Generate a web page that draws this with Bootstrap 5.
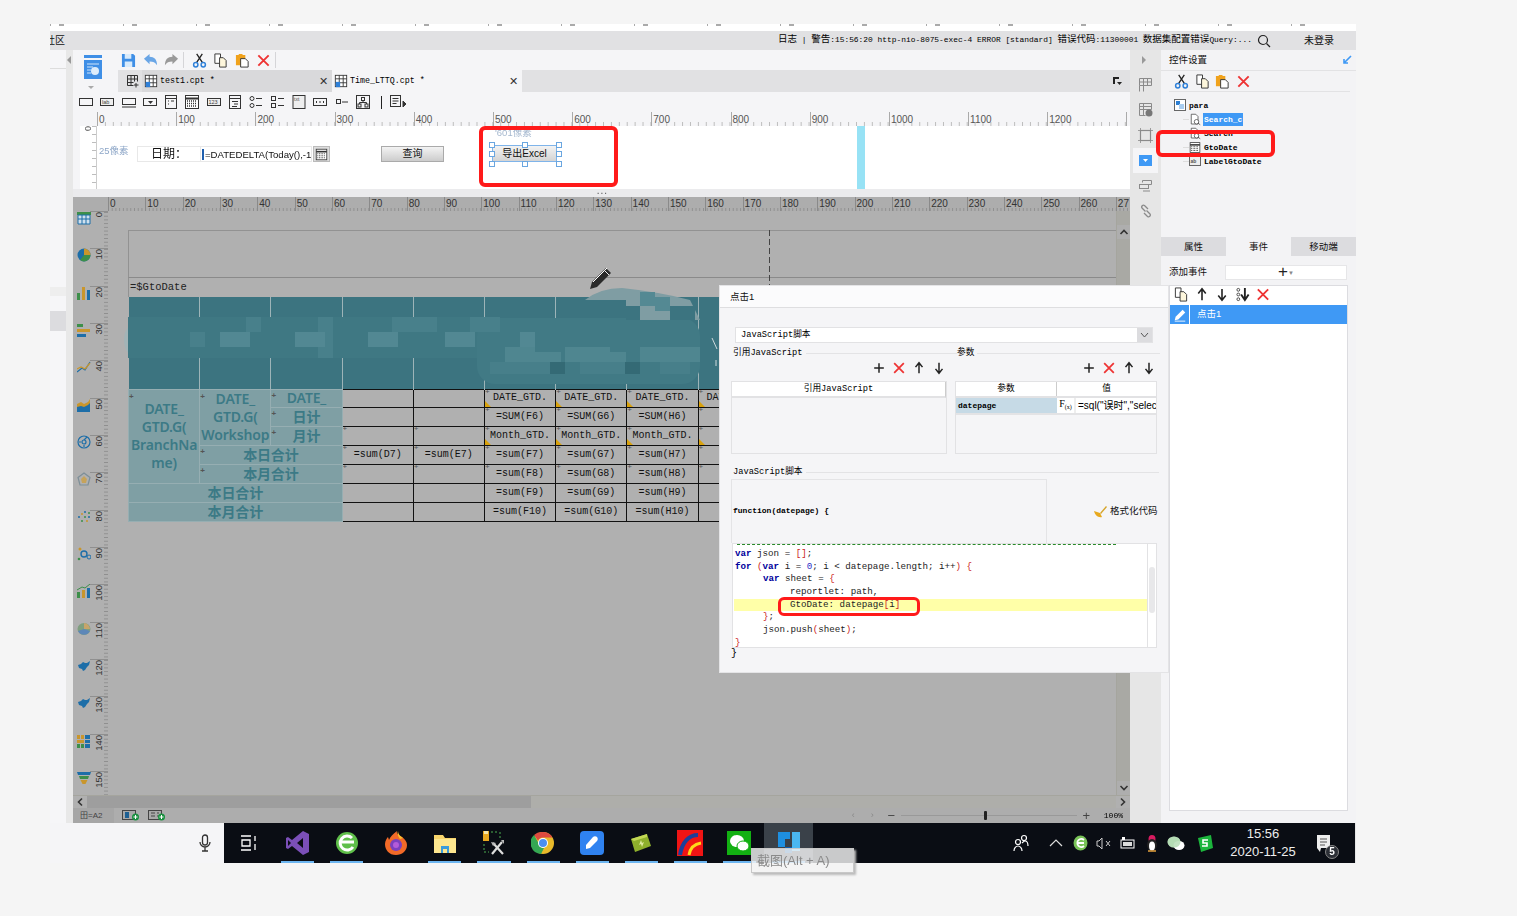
<!doctype html>
<html lang="zh">
<head>
<meta charset="utf-8">
<title>FineReport</title>
<link href="https://cdn.jsdelivr.net/npm/bootstrap@5.3.0/dist/css/bootstrap.min.css" rel="stylesheet">
<style>
html,body{background:#f5f5f5;margin:0;height:916px;overflow:hidden}
body{font-family:"Liberation Sans","Noto Sans CJK SC",sans-serif;font-size:10px;color:#111}
.mono{font-family:"Liberation Mono","Noto Sans CJK SC",monospace;color:#000}
.shot{position:relative;width:1306px;height:839px;margin:24px 0 0 50px;filter:blur(.3px)}
.scrap{height:7px;background:#fff linear-gradient(90deg,#aaa 1px,transparent 1px,transparent 9px,#aaa 9px,#aaa 14px,transparent 14px) 0 0/73px 2px repeat-x}
.headbar{height:19px;background:#e1e1e3;font-size:9.5px;white-space:nowrap;overflow:hidden}
.headbar .cut{margin-left:-5px;font-size:10px}
.logtxt{font-size:7.9px;margin-right:5px}
.logtxt b{font-weight:400;font-size:9.5px}
.userlink{width:85px;padding-left:33px;font-size:10px}
.mainrow{height:773px}
.lstrip{width:16px;background:#f6f6f8;position:relative}
.lstrip i{display:block}
.lline{height:1px;background:#ddd;margin-top:18px}
.lgap{height:218px}
.ltab{height:9px;background:#eee}
.lgap2{height:15px}
.lblock{height:20px;background:#dcdcdf}
.rail{width:7px;background:#e8e8e8;padding-top:6px}
.tri-l{width:0;height:0;border:4px solid transparent;border-right-color:#999;border-left:0;margin-left:1px}
.designer{width:1057px}
.dtop{background:#f5f5f7}
.bigcol{width:45px;height:42px}
.bigcol svg{margin:5px 0 0 10px;display:block}
.tbar{height:20px;background:#f5f5f7}
.tcell{width:21.5px;height:20px}
.vsep{width:1px;height:16px;background:#d5d5d8}
.vsep-m{margin-right:5px}
.tabs{height:22px;background:#e1e1e3}
.tadd{width:24px;padding-left:8px;background:#e1e1e3}
.tab1,.tab2{width:190px;font-size:8.3px;padding:0 3px 0 2px}
.tab1{background:#d9d9db}
.tab2{background:#f5f5f7}
.tab-x{margin-left:auto;font-size:11px;color:#333;margin-right:1px;font-family:"Liberation Sans",sans-serif}
.tab-lbl{margin-left:2px;white-space:pre}
.tabflag{margin:0 8px 0 auto}
.wrow{height:20px;padding-left:5px;background:#f5f5f7}
.wcell{width:21.3px}
.wbar{width:1px;height:13px;background:#222;margin:0 7px 0 5px}
.htop{height:14px;background:#f5f5f7;padding-left:24px}
.hr-top{display:flex;flex:1;height:14px;overflow:hidden;background:linear-gradient(90deg,#bdbdbd 1px,transparent 1px) 0 100%/7.92px 4px repeat-x}
.hr-top span{flex:0 0 79.2px;border-left:1px solid #aaa;padding-left:1px;line-height:15px;font-size:10px;color:#555}
.pcol{width:24px;height:63px;background:#f5f5f7;padding-left:7px}
.pruler{width:17px;height:63px;background:#fff linear-gradient(#bdbdbd 1px,transparent 1px) 100% 0/4px 8px repeat-y;color:#555;font-size:9px;border-right:1px solid #ccc;padding-left:3px}
.vlab{writing-mode:vertical-rl;transform:rotate(180deg);display:block;line-height:10px}
.pcanvas{position:relative;height:63px;background:#fff;flex:1;overflow:visible}
.pc{position:absolute}
.px25{left:2px;top:18px;color:#8ea7c8;font-size:9.5px}
.px601{left:398px;top:0;color:#a5b8cf;font-size:9.5px}
.datebox{left:40px;top:20px;width:64px;height:16px;border:1px solid #e8e8e8;font-size:12px;text-align:center;line-height:14px}
.datein{left:103px;top:20px;width:112px;height:16px;border:1px solid #e8e8e8;font-size:9.6px;line-height:15px;white-space:nowrap;overflow:hidden;padding-left:1px}
.datein::before{content:"";border-left:2px solid #1f5fae;margin-right:1px}
.calbtn{left:216px;top:20px;width:17px;height:16px;background:#ddd;border:1px solid #bbb}
.qbtn{left:284px;top:20px;width:63px;height:16px;background:linear-gradient(#f3f3f3,#ccc);border:1px solid #aaa;font-size:10px;line-height:14px;text-align:center}
.xbtn{left:395px;top:19px;width:65px;height:17px;background:linear-gradient(#f3f3f3,#d4d4d4);border:1px solid #7fb4ea;font-size:10px;line-height:15px;text-align:center;white-space:nowrap}
.hd{width:6px;height:6px;background:#fff;border:1px solid #6aa6e0}
.h1{left:392px;top:16px}.h2{left:425px;top:16px}.h3{left:459px;top:16px}
.h4{left:392px;top:25px}.h5{left:459px;top:25px}
.h6{left:392px;top:35px}.h7{left:425px;top:35px}.h8{left:459px;top:35px}
.guide{left:760px;top:0;width:8px;height:63px;background:#97e2f5}
.redbox{position:absolute;border:4px solid #ff1a1a;border-radius:6px}
.rb1{left:429px;top:102px;width:139px;height:61px}
.rb2{left:1106px;top:106px;width:119px;height:27px}
.rb3{left:728px;top:573px;width:142px;height:19px;border-width:3px}
.splitbar{height:8px;background:#ebebed;position:relative;color:#555;line-height:4px;text-align:right;padding-right:522px;letter-spacing:1px}
.dim{height:626px;background:#b0b0b0}
.dr{height:14px;padding-left:35px;background:#adadad}
.hr-dim{display:flex;flex:1;height:14px;overflow:hidden;background:linear-gradient(90deg,#8f8f8f 1px,transparent 1px) 0 100%/3.73px 3px repeat-x}
.hr-dim span{flex:0 0 37.33px;border-left:1px solid #8a8a8a;padding-left:1px;line-height:14px;font-size:10px;color:#333}
.dbody{height:584px}
.vcol{width:35px;overflow:hidden}
.vcell{height:37.33px;flex:none}
.vic{width:17px;padding-left:4px}
.vrl{width:18px;height:37.33px;color:#333;font-size:9.5px;border-top:1px solid #8f8f8f;background:linear-gradient(#8f8f8f 1px,transparent 1px) 100% 0/4px 3.73px repeat-y;padding-left:4px}
.vic svg{display:block}
.sheet{width:1008px;padding:19px 0 0 20px;overflow:hidden;background:#b0b0b0}
.frame1{height:47px;border-top:1px solid #929292;border-left:1px solid #929292}
.frame2{height:20px;border-top:1px solid #8a8a8a;border-left:1px solid #929292;font-size:10.5px;line-height:18px;padding-left:1px;color:#222}
.grid{table-layout:fixed;width:712px;border-collapse:collapse}
.grid col{width:71.2px}
.grid td{height:18.86px;padding:0;text-align:center;line-height:1;overflow:hidden;position:relative;white-space:nowrap}
.hdr td{height:92px;background:#3c7480;border-right:1px solid #9db4b8}
.tl{background:#7f9fa4;border:1px solid #96aeb2;color:#3c7a86;font-family:"Noto Sans","Noto Sans CJK SC",sans-serif;font-weight:600;font-size:14px;letter-spacing:-.15px}
.grid td.tl{line-height:16px}
.grid td.stack{line-height:18px}
.dk{border:1px solid #111;font-size:10px;color:#111}
.ck::before{content:"";position:absolute;left:0;bottom:0;border:3px solid transparent;border-left-color:#d9a20c;border-bottom-color:#d9a20c}
.pl::after{content:"+";position:absolute;left:0;top:-2px;font-size:8px;color:#555;font-family:"Liberation Sans",sans-serif}
.vscr{width:14px;background:#a9a9a4;border-left:1px solid #a5a59e}
.vscr-a{height:14px;background:#aeaeae;display:flex;align-items:center;justify-content:center}
.vscr-a:first-child{margin-top:14px}
.vscr-m{flex:1}
.hscr{height:13px;background:#aeaeaa;margin-left:0;border-top:1px solid #a5a59e}
.hscr-a{width:14px;background:#b0b0b0;flex:none;display:flex;align-items:center;justify-content:center}
.hscr-t{width:444px;background:#9e9e9e}
.hscr-r{flex:1}
.rot180{transform:rotate(180deg)}
.rot90{transform:rotate(90deg)}
.rot270{transform:rotate(-90deg)}
.stat{height:15px;background:#adadad;font-size:8px;color:#444}
.stat-a{width:41px;padding-left:7px;background:#a6a6a6}
.stat-i{margin-left:8px}
.stat-end{margin-left:auto;padding-right:7px}
.zm{color:#888;font-size:9px;width:19px;text-align:center}
.zdark{color:#444;font-size:13px}
.zline{width:176px;height:1px;background:#999;position:relative}
.zline::after{content:"";position:absolute;left:83px;top:-4px;width:3px;height:9px;background:#222;border-radius:1px}
.zpct{margin-left:8px;font-size:8px}
.rrail{width:31px;background:#e6e6e6;padding-top:2px}
.rr-a{height:16px;padding-left:12px}
.tri-r{width:0;height:0;border:4px solid transparent;border-left-color:#999;border-right:0}
.rr{height:25.3px}
.rr.on{background:#f5f5f7;margin:0 3px}
.panel{width:195px;background:#f3f3f5;position:relative}
.ptitle{height:21px;padding:0 4px 0 8px;border-bottom:1px solid #e2e2e4;font-size:9.5px}
.ptool{height:21px;margin:0 6px 0 8px;border-bottom:1px solid #e2e2e4;padding-left:5px;gap:5.500px}
.tree{height:145px;padding-top:6px;font-weight:700}
.tnode{height:14px;padding-left:28px;font-size:8px;white-space:nowrap;position:relative}
.tnode.root{padding-left:13px}
.tnode::before{content:"";position:absolute;left:22px;top:7px;width:6px;border-top:1px solid #ddd}
.tnode.root::before{display:none}
.tnode span{margin-left:2px;padding:0 1px;line-height:13px}
.tnode .sel{background:#3f99f5;color:#fff}
.ptabs{height:19px;font-size:9.5px}
.ptab{width:65px;text-align:center;line-height:19px;background:#dcdcdf}
.ptab.act{background:#f3f3f5}
.addrow{height:29px;padding:4px 8px 0;font-size:9.5px}
.addbox{margin-left:18px;width:122px;height:15px;background:#fff;border:1px solid #e6e6e8;text-align:center;font-size:17px;line-height:12px;color:#222}
.addbox small{font-size:6px;color:#888;vertical-align:2px}
.evlist{margin-left:8px;width:179px;height:526px;background:#fff;border:1px solid #dcdce0}
.evtool{height:19px;padding:0 0 2px 3px;gap:4.600px}
.evtool svg{flex:none}
.evsel{height:19px;background:#3f99f5;color:#fff;font-size:9.5px}
.evpen{width:20px;border-right:1px solid #fff;height:19px}
.evsel span{margin-left:7px}
.taskbar{height:40px}
.tleft{width:174px;background:#f5f5f7;padding-right:12px}
.tdark{flex:1;background:#0a0d14;color:#eee;border-right:1px solid #e6e6e6}
.titem{width:49.1px;height:40px;position:relative}
.titem.ul::after{content:"";position:absolute;left:8px;right:8px;bottom:0;height:2px;background:#6cb5f0}
.titem.hover{background:#3a4149}
.tray{margin-left:auto}
.w34{width:34px}.w24{width:24px}.w23{width:23px}.w25{width:25px}.w42{width:42px;margin-right:9px}
.sp6{width:6px}
.clock{width:82px;text-align:center;font-size:13px;line-height:18px}
.notif{position:relative}
.nbadge{position:absolute;left:21px;top:11px;width:14px;height:14px;border-radius:50%;background:#2c2f36;border:1px solid #888;color:#fff;font-size:10px;line-height:12px;text-align:center;font-weight:700}
.tip{position:absolute;left:701px;top:824px;width:103px;height:25px;background:rgba(244,244,244,.82);border:1px solid #c8c8c8;box-shadow:2px 2px 2px #bbb;color:#8a8a8a;font-size:13px;line-height:23px;padding-left:5px;white-space:nowrap}
.dialog{position:absolute;left:669px;top:261px;width:450px;height:388px;background:#f5f5f7;border:1px solid #e4e4e6}
.dhead{height:22px;background:#fbfbfc;border-bottom:1px solid #dedee0;padding-left:10px;font-size:9.5px;line-height:21px}
.dsel{margin:19px 15px 0 15px;height:16px;background:#fff;border:1px solid #e2e2e4;font-size:8.7px;line-height:14px;padding-left:5px}
.dsel i{float:right;width:15px;height:14px;background:#dcdcdf;margin-right:0}
.legends{height:21px;padding-left:13px;font-size:8.7px}
.leg1{width:224px}.leg1 span,.leg2 span,.leg3 span{background:#f5f5f7;padding-right:3px;position:relative}
.leg1,.leg2,.leg3{background:linear-gradient(#e3e3e5,#e3e3e5) 0 50%/100% 1px no-repeat}
.leg2{width:203px}
.dtools{height:16px;padding-right:9px;margin-top:-3px}
.dt{width:20px;height:16px}
.dtgap{width:130px}
.dtables{gap:8px;padding-left:11px;height:73px;margin-top:4px}
.tbl{border:1px solid #e2e2e4;height:73px;font-size:8.7px}
.tblL{width:216px}.tblR{width:202px}
.thd{height:16px;background:#fff;border-bottom:2px solid #e2e2e4;text-align:center;line-height:14px;flex:none}
.thA{flex:1;border-right:1px solid #ccc}
.thB{width:101px;border-right:1px solid #ccc}
.trow{height:17px;border-bottom:2px solid #e3e3e5}
.tk{width:101px;background:#c6dae6;line-height:15px;padding-left:2px;font-size:8px;font-weight:700}
.tfx{width:17px;font-family:"Liberation Serif",serif;font-size:10px;line-height:12px;text-align:center;background:#fff}
.tfx sub{font-size:6px}
.tval{flex:1;background:#fff;border-left:2px solid #eee;font-family:"Liberation Sans","Noto Sans CJK SC",sans-serif;font-size:10px;line-height:15px;padding-left:2px;white-space:nowrap;overflow:hidden}
.leg3{margin:12px 9px 0 13px;height:12px;font-size:8.7px;line-height:12px}
.fnrow{height:64px;padding-left:11px;margin-top:1px}
.fnbox{width:316px;height:64px;border:1px solid #e4e4e6;border-bottom:0;font-size:8px;line-height:62px;padding-left:1px;font-weight:700}
.fmt{margin-left:47px;font-size:9.5px;gap:3px;color:#111}
.code{position:relative;margin-left:12px;width:425px;height:105px;background:#fff;border:1px solid #e2e2e4;font-size:9.2px;line-height:12.7px;overflow:hidden;padding:4px 0 0 2px;color:#222}
.code .k{color:#00009c;font-weight:700}
.code .p{color:#c22}
.code .n{color:#2a2ac8}
.cl{height:12.7px;white-space:nowrap}
.l1{padding-left:28px}
.l2{padding-left:55px}
.hl{background:#ffffa8;margin:0 8px 0 -1px;padding-left:56px}
.cscroll{position:absolute;right:0;top:0;bottom:0;width:9px;background:#fff;border-left:1px solid #e2e2e4}
.cthumb{display:block;margin:23px 1px 0;height:46px;background:#e8e8ea;border-radius:3px}
.cfrag{position:absolute;left:4px;right:40px;top:0;border-top:1px dashed #2a8a2a}
.closing{padding-left:11px;font-size:10px;line-height:11px}
.over{position:absolute}
.mosaic{left:74px;top:263px}
.pencil{left:538px;top:241px}
.dash{left:719px;top:206px;height:55px;width:1px;background:repeating-linear-gradient(#444 0 6px,transparent 6px 9px)}
</style>
</head>
<body>
<svg class="d-none">
<symbol id="cut" viewBox="0 0 16 16"><path d="M5 10 11 1M11 10 5 1" stroke="#222" stroke-width="1.400" fill="none"/><circle cx="4" cy="12.500" r="2.300" fill="none" stroke="#2f80d8" stroke-width="1.600"/><circle cx="12" cy="12.500" r="2.300" fill="none" stroke="#2f80d8" stroke-width="1.600"/></symbol>
<symbol id="copy" viewBox="0 0 16 16"><path d="M2 1h6v10H2z" fill="#fff" stroke="#333"/><path d="M7 5h4l3 3v7H7z" fill="#fdf6dc" stroke="#333"/></symbol>
<symbol id="paste" viewBox="0 0 16 16"><path d="M1 2h3V1h4v1h3v11H1z" fill="#f0a21c"/><path d="M6 6h5l3 3v6H6z" fill="#fff" stroke="#333"/></symbol>
<symbol id="del" viewBox="0 0 16 16"><path d="M2.500 2.500l11 11M13.500 2.500l-11 11" stroke="#e33" stroke-width="2"/></symbol>
<symbol id="up" viewBox="0 0 16 16"><path d="M8 14V3M4 7l4-5 4 5" stroke="#222" stroke-width="1.700" fill="none"/></symbol>
<symbol id="dn" viewBox="0 0 16 16"><path d="M8 2v11M4 9l4 5 4-5" stroke="#222" stroke-width="1.700" fill="none"/></symbol>
<symbol id="add" viewBox="0 0 16 16"><path d="M8 2.500v11M2.500 8h11" stroke="#222" stroke-width="1.700"/></symbol>
<symbol id="save" viewBox="0 0 16 16"><path d="M1 1h12l2 2v12H1z" fill="#3f8fe6"/><path d="M4 1h7v5H4zM4 9h8v6H4z" fill="#d9ebfb"/></symbol>
<symbol id="undo" viewBox="0 0 16 16"><path d="M1 6l6-5v3c5 0 8 3 8 9-2-3-4-4-8-4v3z" fill="#6aa6e6"/></symbol>
<symbol id="redo" viewBox="0 0 16 16"><path d="M15 6 9 1v3C4 4 1 7 1 13c2-3 4-4 8-4v3z" fill="#9a9a9a"/></symbol>
<symbol id="cal" viewBox="0 0 16 16"><rect x="1.500" y="1.500" width="13" height="13" fill="#fff" stroke="#333"/><path d="M1.500 4.500h13" stroke="#333" stroke-width="2"/><path d="M3 7h10M3 9.500h10M3 12h10" stroke="#333" stroke-dasharray="1 1" stroke-width="1.300"/></symbol>
<symbol id="grid" viewBox="0 0 16 16"><rect x="1.500" y="1.500" width="13" height="13" fill="#fff" stroke="#333"/><path d="M1.500 5.500h13M1.500 10h13M6 1.500v13M10.500 1.500v13" stroke="#333"/><rect x="2" y="9" width="5" height="6" fill="#2f80d8"/></symbol>
<symbol id="search" viewBox="0 0 16 16"><path d="M3 1h6l3 3v10H3z" fill="#fff" stroke="#444"/><circle cx="10" cy="11" r="3" fill="#fff" stroke="#444"/><path d="m12 13 3 2" stroke="#444"/></symbol>
<symbol id="pen" viewBox="0 0 16 16"><path d="M2 14l1-4 8-8 3 3-8 8z" fill="#fff"/><path d="M2 15h12" stroke="#fff"/></symbol>
<symbol id="chev" viewBox="0 0 10 10"><path d="M1.500 7 5 3.500 8.500 7" fill="none" stroke="#333" stroke-width="1.600"/></symbol>
</svg>

<div class="shot">
  <div class="scrap"></div>
  <div class="headbar d-flex align-items-center">
    <span class="cut">社区</span>
    <span class="logtxt mono ms-auto"><b>日志</b> | <b>警告</b>:15:56:20 http-nio-8075-exec-4 ERROR [standard] <b>错误代码</b>:11300001 <b>数据集配置错误</b>Query:...</span>
    <svg width="14" height="14" viewBox="0 0 14 14" fill="none" stroke="#222" stroke-width="1.200"><circle cx="6" cy="6" r="4.500"/><path d="m9.500 9.500 3.500 3.500"/></svg>
    <span class="userlink">未登录</span>
  </div>

  <div class="mainrow d-flex">
    <div class="lstrip">
      <i class="lline"></i><i class="lgap"></i><i class="ltab"></i><i class="lgap2"></i><i class="lblock"></i>
    </div>
    <div class="rail"><div class="tri-l"></div></div>

    <div class="designer d-flex flex-column">
      <div class="dtop d-flex">
        <div class="bigcol">
          <svg width="20" height="36" viewBox="0 0 20 36"><rect x="1" y="0" width="18" height="3" fill="#3f8fe6"/><rect x="1" y="5" width="18" height="19" fill="#3f8fe6"/><path d="M4 9h12M4 12h6M4 15h4M4 18h4" stroke="#cfe4fa"/><circle cx="12" cy="16" r="4" fill="#dcecfb"/><path d="M5 31h6l-3 3z" fill="#aaa"/></svg>
        </div>
        <div class="flex-grow-1">
          <div class="tbar d-flex align-items-center">
            <span class="tcell d-flex align-items-center justify-content-center"><svg width="15" height="15"><use href="#save"/></svg></span>
            <span class="tcell d-flex align-items-center justify-content-center"><svg width="15" height="15"><use href="#undo"/></svg></span>
            <span class="tcell d-flex align-items-center justify-content-center"><svg width="15" height="15"><use href="#redo"/></svg></span>
            <span class="vsep vsep-m"></span>
            <span class="tcell d-flex align-items-center justify-content-center"><svg width="15" height="15"><use href="#cut"/></svg></span>
            <span class="tcell d-flex align-items-center justify-content-center"><svg width="15" height="15"><use href="#copy"/></svg></span>
            <span class="tcell d-flex align-items-center justify-content-center"><svg width="15" height="15"><use href="#paste"/></svg></span>
            <span class="tcell d-flex align-items-center justify-content-center"><svg width="15" height="15"><use href="#del"/></svg></span>
            <span class="vsep"></span>
          </div>
          <div class="tabs d-flex align-items-center">
            <div class="tadd h-100 d-flex align-items-center"><svg width="14" height="14" viewBox="0 0 14 14" fill="none" stroke="#333"><path d="M1.500 1.500h10v6M1.500 1.500v10h6M1.500 5h10M1.500 8.500h6M5 1.500v10M8.500 1.500v6M10 9v4.500M8 11h4.500"/></svg></div>
            <div class="tab1 h-100 d-flex align-items-center mono"><svg width="14" height="14"><use href="#grid"/></svg><span class="tab-lbl">test1.cpt *</span><span class="tab-x">✕</span></div>
            <div class="tab2 h-100 d-flex align-items-center mono"><svg width="14" height="14"><use href="#grid"/></svg><span class="tab-lbl">Time_LTTQ.cpt *</span><span class="tab-x">✕</span></div>
            <svg class="tabflag" width="10" height="10" viewBox="0 0 10 10"><path d="M1 1h6v2H3v5H1z" fill="#222"/><path d="M5 6h5L7.500 9z" fill="#222"/></svg>
          </div>
        </div>
      </div>
      <div class="wrow d-flex align-items-center">
        <span class="wcell"><svg width="16" height="16" viewBox="0 0 16 16" fill="none" stroke="#333"><rect x="1.500" y="4.500" width="13" height="7"/></svg></span>
        <span class="wcell"><svg width="16" height="16" viewBox="0 0 16 16" fill="none" stroke="#333"><rect x="1.500" y="4.500" width="13" height="7" fill="#eee"/><text x="3" y="10" font-size="5.500" stroke="none" fill="#444" font-family="Liberation Sans">lab</text></svg></span>
        <span class="wcell"><svg width="16" height="16" viewBox="0 0 16 16" fill="none" stroke="#333"><rect x="1.500" y="4.500" width="13" height="6"/><path d="M1 13h14"/></svg></span>
        <span class="wcell"><svg width="16" height="16" viewBox="0 0 16 16" fill="none" stroke="#333"><rect x="1.500" y="4.500" width="13" height="7"/><path d="M6 7h5L8.500 10z" fill="#333" stroke="none"/></svg></span>
        <span class="wcell"><svg width="16" height="16" viewBox="0 0 16 16" fill="none" stroke="#333"><rect x="2.500" y="1.500" width="11" height="13"/><path d="M2.500 4.500h11M5 7h1M5 10h1M8 7h3" /></svg></span>
        <span class="wcell"><svg width="16" height="16"><use href="#cal"/></svg></span>
        <span class="wcell"><svg width="16" height="16" viewBox="0 0 16 16" fill="none" stroke="#333"><rect x="1.500" y="4.500" width="13" height="7" fill="#eee"/><text x="2.500" y="10" font-size="5.500" stroke="none" fill="#444" font-family="Liberation Sans">123</text></svg></span>
        <span class="wcell"><svg width="16" height="16" viewBox="0 0 16 16" fill="none" stroke="#333"><rect x="2.500" y="1.500" width="11" height="13"/><path d="M2.500 4.500h11M5 7.500h6M7 10h4M5 12.500h5"/></svg></span>
        <span class="wcell"><svg width="16" height="16" viewBox="0 0 16 16" fill="none" stroke="#333"><circle cx="4" cy="4.500" r="2"/><circle cx="4" cy="11.500" r="2"/><path d="M8 4.500h6M8 11.500h6"/></svg></span>
        <span class="wcell"><svg width="16" height="16" viewBox="0 0 16 16" fill="none" stroke="#333"><rect x="1.500" y="2.500" width="4" height="4"/><rect x="1.500" y="9.500" width="4" height="4"/><path d="M8 4.500h6M8 11.500h6"/></svg></span>
        <span class="wcell"><svg width="16" height="16" viewBox="0 0 16 16" fill="none" stroke="#333"><rect x="2" y="1.500" width="12" height="13" fill="#eee"/><text x="3" y="7" font-size="5" stroke="none" fill="#555" font-family="Liberation Sans">txt</text></svg></span>
        <span class="wcell"><svg width="16" height="16" viewBox="0 0 16 16" fill="none" stroke="#333"><rect x="1.500" y="4.500" width="13" height="7"/><path d="M4 8h1M7.500 8h1M11 8h1" stroke-width="2"/></svg></span>
        <span class="wcell"><svg width="16" height="16" viewBox="0 0 16 16" fill="none" stroke="#333"><rect x="2.500" y="5.500" width="4" height="4"/><path d="M8 8h6"/></svg></span>
        <span class="wcell"><svg width="16" height="16" viewBox="0 0 16 16" fill="none" stroke="#333"><rect x="1.500" y="1.500" width="13" height="13"/><rect x="6.500" y="3.500" width="3" height="3"/><rect x="3" y="10" width="3" height="3"/><rect x="10" y="10" width="3" height="3"/><path d="M8 6.500v2M4.500 10V8.500h7V10"/></svg></span>
        <span class="wbar"></span>
        <span class="wcell"><svg width="19" height="16" viewBox="0 0 19 16" fill="none" stroke="#333"><rect x="1.500" y="1.500" width="10" height="11"/><path d="M3.500 4.500h6M3.500 7h6M3.500 9.500h4"/><path d="M14 7l3 3-3 3z" fill="#333"/></svg></span>
      </div>
      <div class="htop d-flex">
        <div class="hr-top"><span>0</span><span>100</span><span>200</span><span>300</span><span>400</span><span>500</span><span>600</span><span>700</span><span>800</span><span>900</span><span>1000</span><span>1100</span><span>1200</span><span></span></div>
      </div>
      <div class="d-flex">
        <div class="pcol"><div class="pruler"><span class="vlab">0</span></div></div>
        <div class="pcanvas">
          <span class="pc px25">25像素</span>
          <span class="pc px601">'601像素</span>
          <div class="pc datebox">日期：</div>
          <div class="pc datein">=DATEDELTA(Today(),-1</div>
          <div class="pc calbtn d-flex align-items-center justify-content-center"><svg width="13" height="13"><use href="#cal"/></svg></div>
          <div class="pc qbtn">查询</div>
          <div class="pc xbtn">导出Excel</div>
          <i class="pc hd h1"></i><i class="pc hd h2"></i><i class="pc hd h3"></i><i class="pc hd h4"></i><i class="pc hd h5"></i><i class="pc hd h6"></i><i class="pc hd h7"></i><i class="pc hd h8"></i>
          <i class="pc guide"></i>
        </div>
      </div>
      <div class="splitbar">...</div>

      <div class="dim d-flex flex-column">
        <div class="dr d-flex">
          <div class="hr-dim"><span>0</span><span>10</span><span>20</span><span>30</span><span>40</span><span>50</span><span>60</span><span>70</span><span>80</span><span>90</span><span>100</span><span>110</span><span>120</span><span>130</span><span>140</span><span>150</span><span>160</span><span>170</span><span>180</span><span>190</span><span>200</span><span>210</span><span>220</span><span>230</span><span>240</span><span>250</span><span>260</span><span>27</span></div>
        </div>
        <div class="dbody d-flex">
          <div class="vcol d-flex flex-column">
            <div class="vcell d-flex"><div class="vic"><svg width="14" height="14" viewBox="0 0 14 14"><rect x="0" y="1" width="14" height="3" fill="#3d8f4a"/><path d="M1 4h12v9H1z" fill="#cfe0ee" stroke="#1d6ea8"/><path d="M1 8h12M5 4v9M9 4v9" stroke="#1d6ea8"/></svg></div><div class="vrl"><span class="vlab">0</span></div></div>
            <div class="vcell d-flex"><div class="vic"><svg width="14" height="14" viewBox="0 0 14 14"><circle cx="7" cy="7" r="6.500" fill="#1d6ea8"/><path d="M7 7V.5A6.500 6.500 0 0 1 13.500 7z" fill="#c9962c"/><path d="M7 7h6.500A6.500 6.500 0 0 1 3 12z" fill="#3d8f4a"/></svg></div><div class="vrl"><span class="vlab">10</span></div></div>
            <div class="vcell d-flex"><div class="vic"><svg width="14" height="14" viewBox="0 0 14 14"><rect x="0" y="7" width="3" height="7" fill="#3d8f4a"/><rect x="5" y="1" width="3" height="13" fill="#c9962c"/><rect x="10" y="4" width="3" height="10" fill="#1d6ea8"/></svg></div><div class="vrl"><span class="vlab">20</span></div></div>
            <div class="vcell d-flex"><div class="vic"><svg width="14" height="14" viewBox="0 0 14 14"><rect x="0" y="1" width="6" height="3" fill="#3d8f4a"/><rect x="0" y="6" width="13" height="3" fill="#c9962c"/><rect x="0" y="11" width="9" height="3" fill="#1d6ea8"/></svg></div><div class="vrl"><span class="vlab">30</span></div></div>
            <div class="vcell d-flex"><div class="vic"><svg width="14" height="14" viewBox="0 0 14 14" fill="none" stroke-width="1.200"><path d="M0 12 5 8l3 2 5-8" stroke="#1d6ea8"/><path d="M0 9l4-2 4 2 5-6" stroke="#c9962c"/></svg></div><div class="vrl"><span class="vlab">40</span></div></div>
            <div class="vcell d-flex"><div class="vic"><svg width="14" height="14" viewBox="0 0 14 14"><path d="M0 6l4-2 3 2 4-2 2-3v13H0z" fill="#c9962c"/><path d="M0 9l4-1 3 1 4-2 2-2v9H0z" fill="#1d6ea8"/></svg></div><div class="vrl"><span class="vlab">50</span></div></div>
            <div class="vcell d-flex"><div class="vic"><svg width="14" height="14" viewBox="0 0 14 14" fill="none" stroke="#1d6ea8" stroke-width="1.200"><circle cx="7" cy="7" r="6"/><circle cx="7" cy="7" r="2"/><path d="M7 5 10 2M2 7h2M7 12v-2"/></svg></div><div class="vrl"><span class="vlab">60</span></div></div>
            <div class="vcell d-flex"><div class="vic"><svg width="14" height="14" viewBox="0 0 14 14" fill="none" stroke="#7d8f98" stroke-width="1.200"><path d="M7 1l6 4.500-2 7.500H3L1 5.500z"/><path d="M7 4l3 3-1 4H5L4 7z" fill="#c6a35a" stroke="none"/></svg></div><div class="vrl"><span class="vlab">70</span></div></div>
            <div class="vcell d-flex"><div class="vic"><svg width="14" height="14" viewBox="0 0 14 14"><g fill="#1d6ea8"><circle cx="2" cy="7" r="1"/><circle cx="8" cy="2" r="1"/><circle cx="12" cy="7" r="1"/></g><g fill="#c9962c"><circle cx="5" cy="4" r="1"/><circle cx="10" cy="11" r="1"/></g><g fill="#3d8f4a"><circle cx="5" cy="11" r="1"/><circle cx="8" cy="7" r="1"/><circle cx="12" cy="3" r="1"/></g></svg></div><div class="vrl"><span class="vlab">80</span></div></div>
            <div class="vcell d-flex"><div class="vic"><svg width="14" height="14" viewBox="0 0 14 14" fill="none"><circle cx="7" cy="7" r="3" stroke="#1d6ea8" stroke-width="1.400"/><circle cx="3" cy="2" r="1.500" fill="#c9962c"/><circle cx="12" cy="10" r="2" stroke="#1d6ea8"/><circle cx="2" cy="12" r="1.300" fill="#3d8f4a"/></svg></div><div class="vrl"><span class="vlab">90</span></div></div>
            <div class="vcell d-flex"><div class="vic"><svg width="14" height="14" viewBox="0 0 14 14"><rect x="0" y="8" width="3" height="6" fill="#3d8f4a"/><rect x="5" y="6" width="3" height="8" fill="#c9962c"/><rect x="10" y="4" width="3" height="10" fill="#1d6ea8"/><path d="M0 6l5-3 3 1 5-4" stroke="#3d8f4a" fill="none"/></svg></div><div class="vrl"><span class="vlab">100</span></div></div>
            <div class="vcell d-flex"><div class="vic"><svg width="14" height="14" viewBox="0 0 14 14"><ellipse cx="7" cy="7" rx="6.500" ry="6" fill="#7f9f7f"/><path d="M7 7 1 9a6.500 6 0 0 0 12 0z" fill="#5d87b8"/><path d="M7 7V1a6.500 6 0 0 1 6 6z" fill="#c7a56a"/></svg></div><div class="vrl"><span class="vlab">110</span></div></div>
            <div class="vcell d-flex"><div class="vic"><svg width="14" height="14" viewBox="0 0 14 14"><path d="M1 6l3-1 2-2 2 1 2 0 3-2-1 4-2 2-2 3-2 1-1-2-3-1z" fill="#1d6ea8"/></svg></div><div class="vrl"><span class="vlab">120</span></div></div>
            <div class="vcell d-flex"><div class="vic"><svg width="14" height="14" viewBox="0 0 14 14"><path d="M1 6l3-1 2-2 2 1 2 0 3-2-1 4-2 2-2 3-2 1-1-2-3-1z" fill="#1d6ea8"/></svg></div><div class="vrl"><span class="vlab">130</span></div></div>
            <div class="vcell d-flex"><div class="vic"><svg width="14" height="14" viewBox="0 0 14 14"><rect x="0" y="1" width="3" height="4" fill="#c9962c"/><rect x="4" y="1" width="3" height="4" fill="#c9962c"/><rect x="0" y="6" width="7" height="3" fill="#c9962c"/><rect x="0" y="10" width="3" height="4" fill="#3d8f4a"/><rect x="4" y="10" width="3" height="4" fill="#3d8f4a"/><rect x="8" y="1" width="5" height="4" fill="#1d6ea8"/><rect x="8" y="6" width="5" height="3" fill="#1d6ea8"/><rect x="8" y="10" width="5" height="4" fill="#1d6ea8"/></svg></div><div class="vrl"><span class="vlab">140</span></div></div>
            <div class="vcell d-flex"><div class="vic"><svg width="14" height="14" viewBox="0 0 14 14"><path d="M0 1h14l-1 3H1z" fill="#1d6ea8"/><path d="M2 5h10l-1 3H3z" fill="#3d8f4a"/><path d="M3.500 9h7l-2 4h-3z" fill="#c9962c"/></svg></div><div class="vrl"><span class="vlab">150</span></div></div>
          </div>
          <div class="sheet">
            <div class="frame1"></div>
            <div class="frame2 mono">=$GtoDate</div>
            <table class="grid mono">
              <colgroup><col><col><col><col><col><col><col><col><col><col></colgroup>
              <tr class="hdr"><td></td><td></td><td></td><td></td><td></td><td></td><td></td><td></td><td></td><td></td></tr>
              <tr><td class="tl stack pl" rowspan="5">DATE_<br>GTD.G(<br>BranchNa<br>me)</td><td class="tl stack pl" rowspan="3">DATE_<br>GTD.G(<br>Workshop</td><td class="tl pl">DATE_</td><td class="dk"></td><td class="dk"></td><td class="dk pl ck">DATE_GTD.</td><td class="dk pl ck">DATE_GTD.</td><td class="dk pl ck">DATE_GTD.</td><td class="dk pl ck">DATE_GTD.</td><td class="dk"></td></tr>
              <tr><td class="tl pl">日计</td><td class="dk"></td><td class="dk"></td><td class="dk pl">=SUM(F6)</td><td class="dk pl">=SUM(G6)</td><td class="dk pl">=SUM(H6)</td><td class="dk pl"></td><td class="dk"></td></tr>
              <tr><td class="tl pl">月计</td><td class="dk pl"></td><td class="dk pl"></td><td class="dk pl ck">Month_GTD.</td><td class="dk pl ck">Month_GTD.</td><td class="dk pl ck">Month_GTD.</td><td class="dk pl ck"></td><td class="dk"></td></tr>
              <tr><td class="tl pl" colspan="2">本日合计</td><td class="dk pl">=sum(D7)</td><td class="dk pl">=sum(E7)</td><td class="dk pl">=sum(F7)</td><td class="dk pl">=sum(G7)</td><td class="dk pl">=sum(H7)</td><td class="dk pl"></td><td class="dk"></td></tr>
              <tr><td class="tl pl" colspan="2">本月合计</td><td class="dk pl"></td><td class="dk pl"></td><td class="dk pl">=sum(F8)</td><td class="dk pl">=sum(G8)</td><td class="dk pl">=sum(H8)</td><td class="dk pl"></td><td class="dk"></td></tr>
              <tr><td class="tl" colspan="3">本日合计</td><td class="dk"></td><td class="dk"></td><td class="dk">=sum(F9)</td><td class="dk">=sum(G9)</td><td class="dk">=sum(H9)</td><td class="dk"></td><td class="dk"></td></tr>
              <tr><td class="tl" colspan="3">本月合计</td><td class="dk"></td><td class="dk"></td><td class="dk">=sum(F10)</td><td class="dk">=sum(G10)</td><td class="dk">=sum(H10)</td><td class="dk"></td><td class="dk"></td></tr>
            </table>
          </div>
          <div class="vscr d-flex flex-column"><div class="vscr-a"><svg width="10" height="10"><use href="#chev"/></svg></div><div class="vscr-m"></div><div class="vscr-a"><svg class="rot180" width="10" height="10"><use href="#chev"/></svg></div></div>
        </div>
        <div class="hscr d-flex">
          <div class="hscr-a"><svg class="rot270" width="10" height="10"><use href="#chev"/></svg></div><div class="hscr-t"></div><div class="hscr-r"></div><div class="hscr-a"><svg class="rot90" width="10" height="10"><use href="#chev"/></svg></div>
        </div>
        <div class="stat d-flex align-items-center">
          <div class="stat-a h-100 d-flex align-items-center">田=A2</div>
          <svg class="stat-i" width="18" height="11" viewBox="0 0 18 11"><rect x=".5" y=".5" width="13" height="9" fill="#a8a8a8" stroke="#444"/><rect x="3" y="2" width="4" height="6" fill="#1d5f92"/><circle cx="13.500" cy="7" r="3.500" fill="#1b9140"/><path d="M13.500 5v4M11.500 7h4" stroke="#fff"/></svg>
          <svg class="stat-i" width="18" height="11" viewBox="0 0 18 11"><rect x=".5" y=".5" width="13" height="9" fill="#a8a8a8" stroke="#444"/><path d="M3 3h4M3 6h4M9 3h2M9 6h2" stroke="#444"/><circle cx="13.500" cy="7" r="3.500" fill="#1b9140"/><path d="M13.500 5v4M11.500 7h4" stroke="#fff"/></svg>
          <div class="stat-end d-flex align-items-center">
            <span class="zm">‹</span><span class="zm">›</span><span class="zm zdark">−</span>
            <span class="zline"></span><span class="zm zdark">+</span><span class="zpct mono">100%</span>
          </div>
        </div>
      </div>
    </div>

    <div class="rrail d-flex flex-column">
      <div class="rr-a d-flex align-items-center"><div class="tri-r"></div></div>
      <div class="rr d-flex align-items-center justify-content-center mt-1"><svg width="15" height="15" viewBox="0 0 15 15" fill="none" stroke="#8a8a8a"><path d="M1.500 1.500h12v7h-12zM1.500 8.500v6M5.500 1.500v13M9.500 1.500v7M1.500 5h12"/></svg></div>
      <div class="rr d-flex align-items-center justify-content-center"><svg width="15" height="15" viewBox="0 0 15 15" fill="none" stroke="#8a8a8a"><path d="M1.500 1.500h12v6h-12zM1.500 7.500v6h6M1.500 4.500h12M5.500 1.500v12"/><circle cx="11" cy="11" r="3.500" fill="#777" stroke="none"/></svg></div>
      <div class="rr d-flex align-items-center justify-content-center"><svg width="15" height="15" viewBox="0 0 15 15" fill="none" stroke="#8a8a8a" stroke-width="1.200"><rect x="2.500" y="2.500" width="10" height="10"/><path d="M0 2.500h15M0 12.500h15M2.500 0v15M12.500 0v15" stroke-width=".8"/></svg></div>
      <div class="rr on d-flex align-items-center justify-content-center"><svg width="13" height="11" viewBox="0 0 13 11"><rect width="13" height="11" fill="#3f99f5"/><path d="M4 4h5L6.500 7z" fill="#fff"/></svg></div>
      <div class="rr d-flex align-items-center justify-content-center"><svg width="15" height="13" viewBox="0 0 15 13" fill="none" stroke="#8a8a8a"><rect x="1.500" y="5.500" width="9" height="4"/><path d="M4.500 3.500v-2h9v4h-3M5 12h7"/></svg></div>
      <div class="rr d-flex align-items-center justify-content-center"><svg width="14" height="14" viewBox="0 0 14 14" fill="none" stroke="#8a8a8a" stroke-width="1.300"><path d="M6.500 7.500 3 4a1.800 1.800 0 0 1 2.500-2.500L9 5"/><path d="M7.500 6.500 11 10a1.800 1.800 0 0 1-2.500 2.500L5 9"/></svg></div>
    </div>

    <div class="panel">
      <div class="ptitle d-flex align-items-center">控件设置<svg class="ms-auto" width="10" height="10" viewBox="0 0 10 10"><path d="M9 1 2 8M2 4v4h4" stroke="#3f99f5" stroke-width="1.600" fill="none"/></svg></div>
      <div class="ptool d-flex align-items-center">
        <svg width="15" height="15"><use href="#cut"/></svg><svg width="15" height="15"><use href="#copy"/></svg><svg width="15" height="15"><use href="#paste"/></svg><svg width="15" height="15"><use href="#del"/></svg>
      </div>
      <div class="tree mono">
        <div class="tnode root d-flex align-items-center"><svg width="12" height="12" viewBox="0 0 12 12"><rect x=".5" y=".5" width="11" height="11" fill="#fff" stroke="#666"/><rect x="2" y="2" width="4" height="4" fill="#2d7fd3"/><rect x="5" y="5" width="5" height="5" fill="#a9cdf0"/></svg><span>para</span></div>
        <div class="tnode d-flex align-items-center"><svg width="12" height="13"><use href="#search"/></svg><span class="sel">Search_c</span></div>
        <div class="tnode d-flex align-items-center"><svg width="12" height="13"><use href="#search"/></svg><span>Search</span></div>
        <div class="tnode d-flex align-items-center"><svg width="12" height="13"><use href="#cal"/></svg><span>GtoDate</span></div>
        <div class="tnode d-flex align-items-center"><svg width="12" height="10" viewBox="0 0 12 10" fill="none" stroke="#666"><rect x=".5" y=".5" width="11" height="9" fill="#eee"/><text x="1.500" y="7" font-size="5" fill="#555" stroke="none" font-family="Liberation Sans">ab</text></svg><span>LabelGtoDate</span></div>
      </div>
      <div class="ptabs d-flex"><div class="ptab">属性</div><div class="ptab act">事件</div><div class="ptab">移动端</div></div>
      <div class="addrow d-flex align-items-center">添加事件<div class="addbox">+<small>▼</small></div></div>
      <div class="evlist">
        <div class="evtool d-flex align-items-center">
          <svg width="16" height="15"><use href="#copy"/></svg><svg width="16" height="15"><use href="#up"/></svg><svg width="16" height="15"><use href="#dn"/></svg>
          <svg width="16" height="15" viewBox="0 0 16 16"><path d="M10 1v11M6 8l4 6 4-6" stroke="#222" stroke-width="2" fill="none"/><g fill="none" stroke="#444"><circle cx="3" cy="3" r="1.500"/><circle cx="3" cy="8" r="1.500"/><circle cx="3" cy="13" r="1.500"/></g></svg>
          <svg width="16" height="15"><use href="#del"/></svg>
        </div>
        <div class="evsel d-flex align-items-center"><div class="evpen d-flex align-items-center justify-content-center"><svg width="14" height="14"><use href="#pen"/></svg></div><span>点击1</span></div>
      </div>
    </div>
  </div>

  <div class="taskbar d-flex">
    <div class="tleft d-flex align-items-center justify-content-end"><svg width="14" height="18" viewBox="0 0 14 18" fill="none" stroke="#333" stroke-width="1.300"><rect x="4.500" y="1" width="5" height="10" rx="2.500"/><path d="M2 8a5 5 0 0 0 10 0M7 13v4M4 17h6"/></svg></div>
    <div class="tdark d-flex align-items-center">
      <div class="titem d-flex align-items-center justify-content-center"><svg width="18" height="18" viewBox="0 0 18 18" fill="none" stroke="#fff" stroke-width="1.300"><path d="M1 2h10M1 16h10M2 6h8v6H2zM15 2v5M15 10v6"/></svg></div>
      <div class="titem ul d-flex align-items-center justify-content-center"><svg width="24" height="26" viewBox="0 0 24 26"><path d="M17 1l6 3v18l-6 3-11-9-4 3-2-1v-10l2-1 4 3z" fill="#7b4fb8"/><path d="M17 8v10l-6-5z" fill="#0a0d14"/><path d="M2 10l3 3-3 3z" fill="#0a0d14"/></svg></div>
      <div class="titem ul d-flex align-items-center justify-content-center"><svg width="24" height="24" viewBox="0 0 24 24"><circle cx="12" cy="12" r="11" fill="#5fbf4a"/><path d="M4 11h15M17 7A7 7 0 1 0 18 16" stroke="#fff" stroke-width="3" fill="none"/></svg></div>
      <div class="titem d-flex align-items-center justify-content-center"><svg width="24" height="26" viewBox="0 0 24 26"><path d="M12 25C5 25 1 20 1 14c0-3 2-6 3-7l1 3c1-3 4-6 8-9-1 3 2 4 5 6 3 2 5 5 5 8 0 6-5 10-11 10z" fill="#f26a28"/><circle cx="12" cy="15" r="6" fill="#7b3fbf"/><circle cx="12" cy="15" r="3" fill="#b35bd9"/><path d="M14 1c0 3 2 5 5 7l-3 1c-2-3-3-5-2-8z" fill="#fbc02d"/></svg></div>
      <div class="titem ul d-flex align-items-center justify-content-center"><svg width="24" height="22" viewBox="0 0 24 22"><path d="M1 3h9l2 3h11v15H1z" fill="#f7d46c"/><path d="M1 7h22v14H1z" fill="#fde68f"/><path d="M8 14h8v7H8z" fill="#3a9bdc"/><path d="M10 17h4v4h-4z" fill="#fde68f"/></svg></div>
      <div class="titem ul d-flex align-items-center justify-content-center"><svg width="24" height="26" viewBox="0 0 24 26"><rect x="1" y="1" width="6" height="10" fill="#e9a820"/><rect x="2" y="1" width="4" height="3" fill="#f6e5a8"/><path d="M9 2h7M18 2v6M2 14v8h5" stroke="#4caf50" stroke-dasharray="2 2" fill="none"/><path d="M10 24 20 12M21 24 11 13" stroke="#ddd" stroke-width="2.200"/><path d="M9 12l5 1-3 3zM19 10h3v4z" fill="#bbb"/></svg></div>
      <div class="titem ul d-flex align-items-center justify-content-center"><svg width="24" height="24" viewBox="0 0 24 24"><circle cx="12" cy="12" r="11" fill="#e8b92a"/><path d="M12 1a11 11 0 0 1 9.500 5.500H12a5.500 5.500 0 0 0-5 3L3 4A11 11 0 0 1 12 1z" fill="#dd4a3f"/><path d="M3 4 8 13a5.500 5.500 0 0 0 5 4l-3 6A11 11 0 0 1 3 4z" fill="#35a853"/><circle cx="12" cy="12" r="5" fill="#fff"/><circle cx="12" cy="12" r="4" fill="#4a8ef0"/></svg></div>
      <div class="titem ul d-flex align-items-center justify-content-center"><svg width="24" height="24" viewBox="0 0 24 24"><rect x="0" y="0" width="24" height="24" rx="4" fill="#2f82f0"/><path d="M6 14l7-8c1-1 3-1 4 0s1 3 0 4l-7 7-4 1z" fill="#fff"/></svg></div>
      <div class="titem ul d-flex align-items-center justify-content-center"><svg width="22" height="20" viewBox="0 0 22 20"><path d="M1 6l16-5 4 12-16 6z" fill="#8fb02c"/><path d="M1 6l16-5 0 3L4 8z" fill="#c3d855"/><path d="M11 7l1 3 2-1-2 5-1-3-2 1z" fill="#dfeaa0"/></svg></div>
      <div class="titem ul d-flex align-items-center justify-content-center"><svg width="26" height="26" viewBox="0 0 26 26"><rect width="26" height="26" fill="#f01414"/><path d="M3 25C5 12 12 5 21 5" stroke="#1d3f9a" stroke-width="4" fill="none"/><path d="M12 25c1-6 5-11 12-12" stroke="#ffd81a" stroke-width="3" fill="none"/></svg></div>
      <div class="titem ul d-flex align-items-center justify-content-center"><svg width="24" height="24" viewBox="0 0 24 24"><rect width="24" height="24" fill="#12b012"/><ellipse cx="10" cy="10" rx="7" ry="6" fill="#fff"/><ellipse cx="16" cy="15" rx="6" ry="5" fill="#fff" stroke="#12b012"/></svg></div>
      <div class="titem ul hover d-flex align-items-center justify-content-center"><svg width="24" height="30" viewBox="0 0 24 30"><path d="M1 4h12v7H8v8H1z" fill="#1e8fe0"/><path d="M15 4h8v19h-8z" fill="#4ab7f0"/><path d="M8 19h7v6H8z" fill="#0d5fb0"/></svg></div>
      <div class="tray d-flex align-items-center">
        <div class="w34 d-flex justify-content-center"><svg width="16" height="18" viewBox="0 0 16 18" fill="none" stroke="#fff" stroke-width="1.200"><circle cx="11" cy="4" r="2.500"/><circle cx="5" cy="8" r="2.500"/><path d="M1 17c0-3 2-5 4-5s4 2 4 5M9 9c1-1 2-2 3-2 2 0 3 2 3 5"/></svg></div>
        <div class="sp6"></div>
        <div class="w24 d-flex justify-content-center"><svg width="14" height="8" viewBox="0 0 14 8" fill="none" stroke="#ddd" stroke-width="1.200"><path d="M1 7 7 1l6 6"/></svg></div>
        <div class="w24 d-flex justify-content-center"><svg width="15" height="16" viewBox="0 0 15 16"><ellipse cx="7.500" cy="8" rx="7" ry="7.500" fill="#78c257"/><path d="M4 8h7M11 5a4 4 0 1 0 0 6" stroke="#fff" stroke-width="1.800" fill="none"/></svg></div>
        <div class="w23 d-flex justify-content-center"><svg width="15" height="13" viewBox="0 0 15 13" fill="none" stroke="#ccc"><path d="M1 4h2l3-3v11L3 9H1zM10 4l4 5M14 4l-4 5"/></svg></div>
        <div class="w25 d-flex justify-content-center"><svg width="16" height="12" viewBox="0 0 16 12"><rect x="1" y="3" width="13" height="8" fill="none" stroke="#fff"/><rect x="3" y="5" width="9" height="4" fill="#ddd"/><path d="M2 3V0h3v3z" fill="#fff"/></svg></div>
        <div class="w24 d-flex justify-content-center"><svg width="12" height="18" viewBox="0 0 12 18"><ellipse cx="6" cy="5" rx="3.500" ry="4" fill="#d81b60"/><ellipse cx="6" cy="11" rx="5" ry="6" fill="#222"/><ellipse cx="6" cy="12" rx="3" ry="4.500" fill="#fff"/><path d="M2 17h8" stroke="#e6a23c" stroke-width="1.500"/></svg></div>
        <div class="w24 d-flex justify-content-center"><svg width="18" height="15" viewBox="0 0 18 15"><ellipse cx="7" cy="6" rx="6.500" ry="5.500" fill="#e8f5e8"/><ellipse cx="12" cy="9.500" rx="5.500" ry="4.500" fill="#fff"/><ellipse cx="7" cy="6" rx="6.500" ry="5.500" fill="#67b667" opacity=".4"/></svg></div>
        <div class="w34 d-flex justify-content-center"><svg width="16" height="17" viewBox="0 0 16 17"><path d="M1 3 14 0l2 13-12 4z" fill="#1cb53c"/><path d="M11 5H6v3h4v3H5" stroke="#fff" stroke-width="1.600" fill="none"/></svg></div>
        <div class="clock">15:56<br>2020-11-25</div>
        <div class="w42 notif d-flex justify-content-center"><svg width="20" height="19" viewBox="0 0 20 19"><path d="M2 1h13v13H6l-1 4-3-4z" fill="#eee"/><path d="M5 5h7M5 8h7M5 11h5" stroke="#555"/></svg><span class="nbadge">5</span></div>
      </div>
    </div>
  </div>

  <svg class="over mosaic" width="596" height="103" viewBox="124 287 596 103">
    <ellipse cx="134" cy="340" rx="10" ry="16" fill="#a3b4b7"/>
    <rect x="128" y="317" width="360" height="41" fill="#3f7883"/>
    <rect x="477" y="318" width="223" height="66" rx="18" fill="#417a85"/>
    <path d="M585 300Q600 288 622 288 660 292 690 300L700 320H626V300z" fill="#7f9da3"/>
    <g fill="#48808b"><rect x="246" y="317" width="15" height="15"/><rect x="318" y="317" width="15" height="41"/><rect x="392" y="317" width="45" height="15"/><rect x="470" y="317" width="30" height="15"/><rect x="190" y="332" width="15" height="15"/></g>
    <g fill="#528893"><rect x="220" y="332" width="30" height="15"/><rect x="295" y="332" width="30" height="15"/><rect x="368" y="332" width="30" height="15"/><rect x="445" y="332" width="30" height="15"/><rect x="520" y="332" width="15" height="15"/></g>
    <g fill="#4f8690"><rect x="505" y="347" width="30" height="15"/><rect x="535" y="352" width="26" height="15"/><rect x="565" y="347" width="45" height="15"/><rect x="640" y="347" width="60" height="15"/><rect x="610" y="352" width="16" height="10"/></g>
    <g fill="#477f8a"><rect x="490" y="362" width="75" height="12"/><rect x="580" y="362" width="45" height="12"/><rect x="660" y="362" width="30" height="12"/></g>
    <g fill="#346a75"><rect x="550" y="362" width="15" height="12"/><rect x="625" y="362" width="15" height="12"/></g>
    <g fill="#548993"><rect x="640" y="292" width="15" height="14"/><rect x="655" y="297" width="15" height="14"/></g>
    <g fill="#3c7480"><rect x="626" y="306" width="14" height="14"/><rect x="670" y="306" width="25" height="14"/></g>
    <path d="M712 338l5 11M716 360v6" stroke="#cdd9db"/>
  </svg>
  <div class="over dash"></div>
  <svg class="over pencil" width="26" height="26" viewBox="0 0 26 26"><path d="M2 24l2-7L18 3l5 5L9 22z" fill="#2a2a2a"/><path d="M5 17l14-14" stroke="#fff" stroke-width="1"/><path d="M16 5l5 5" stroke="#eee"/></svg>

  <div class="dialog">
    <div class="dhead">点击1</div>
    <div class="dsel mono"><i class="d-flex align-items-center justify-content-center"><svg width="9" height="5" viewBox="0 0 9 5" fill="none" stroke="#555"><path d="M1 0l3.500 4L8 0"/></svg></i>JavaScript脚本</div>
    <div class="legends d-flex align-items-center mono"><div class="leg1"><span>引用JavaScript</span></div><div class="leg2"><span>参数</span></div></div>
    <div class="dtools d-flex align-items-center justify-content-end">
      <span class="dt d-flex justify-content-center"><svg width="14" height="14"><use href="#add"/></svg></span><span class="dt d-flex justify-content-center"><svg width="14" height="14"><use href="#del"/></svg></span><span class="dt d-flex justify-content-center"><svg width="14" height="14"><use href="#up"/></svg></span><span class="dt d-flex justify-content-center"><svg width="14" height="14"><use href="#dn"/></svg></span>
      <span class="dtgap"></span>
      <span class="dt d-flex justify-content-center"><svg width="14" height="14"><use href="#add"/></svg></span><span class="dt d-flex justify-content-center"><svg width="14" height="14"><use href="#del"/></svg></span><span class="dt d-flex justify-content-center"><svg width="14" height="14"><use href="#up"/></svg></span><span class="dt d-flex justify-content-center"><svg width="14" height="14"><use href="#dn"/></svg></span>
    </div>
    <div class="dtables d-flex mono">
      <div class="tbl tblL"><div class="thd thA">引用JavaScript</div></div>
      <div class="tbl tblR">
        <div class="d-flex thd"><div class="thB">参数</div><div class="flex-grow-1">值</div></div>
        <div class="trow d-flex"><div class="tk">datepage</div><div class="tfx">F<sub>(x)</sub></div><div class="tval">=sql("误时","selec</div></div>
      </div>
    </div>
    <div class="leg3 mono"><span>JavaScript脚本</span></div>
    <div class="fnrow d-flex">
      <div class="fnbox mono">function(datepage) {</div>
      <div class="fmt d-flex align-items-center"><svg width="13" height="13" viewBox="0 0 13 13"><path d="M0 6l6 2 2 4c-4 1-7-2-8-6z" fill="#e8a91e"/><path d="M6 8l6-7 1 1-6 7z" fill="#d6a52a"/></svg>格式化代码</div>
    </div>
    <div class="code mono">
      <div class="cfrag"></div>
      <div class="cl"><span class="k">var</span> json = <span class="p">[]</span>;</div>
      <div class="cl"><span class="k">for</span> <span class="p">(</span><span class="k">var</span> i = <span class="n">0</span>; i &lt; datepage.length; i++<span class="p">)</span> <span class="p">{</span></div>
      <div class="cl l1"><span class="k">var</span> sheet = <span class="p">{</span></div>
      <div class="cl l2">reportlet: path,</div>
      <div class="cl hl">GtoDate: datepage<span class="p">[</span>i<span class="p">]</span></div>
      <div class="cl l1"><span class="p">}</span>;</div>
      <div class="cl l1">json.push<span class="p">(</span>sheet<span class="p">)</span>;</div>
      <div class="cl"><span class="p">}</span></div>
      <div class="cscroll"><span class="cthumb"></span></div>
    </div>
    <div class="closing mono">}</div>
  </div>

  <div class="redbox rb1"></div>
  <div class="redbox rb2"></div>
  <div class="redbox rb3"></div>
  <div class="tip">截图(Alt + A)</div>
</div>
<script src="https://cdn.jsdelivr.net/npm/bootstrap@5.3.0/dist/js/bootstrap.bundle.min.js"></script>
</body>
</html>
